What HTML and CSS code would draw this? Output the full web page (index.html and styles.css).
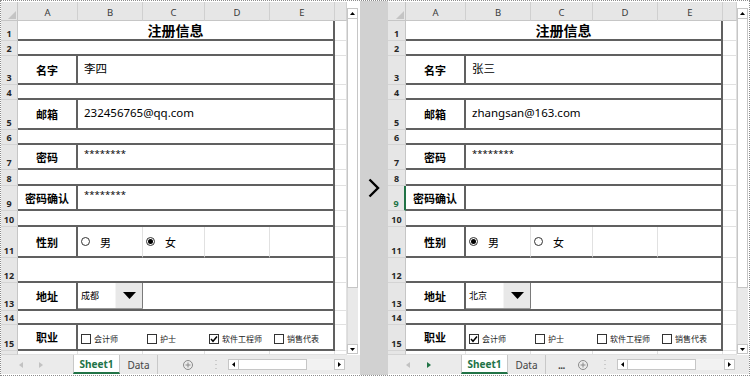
FILE: index.html
```html
<!DOCTYPE html>
<html>
<head>
<meta charset="utf-8">
<link rel="stylesheet" href="styles.css">
</head>
<body>
<div class="frame">
  <!-- LEFT PANE -->
  <div class="pane">
    <div class="sheet">
      <div class="grid">
        <div class="corner"><svg width="8" height="8" viewBox="0 0 8 8"><path d="M8 0 L8 8 L0 8 Z" fill="#c4c4c4"/></svg></div>
        <div class="ch">A</div><div class="ch">B</div><div class="ch">C</div><div class="ch">D</div><div class="ch">E</div><div class="ch"></div>

        <div class="rh">1</div><div class="c b s5 title">注册信息</div><div class="c"></div>
        <div class="rh">2</div><div class="c b s5"></div><div class="c"></div>
        <div class="rh">3</div><div class="c b lbl">名字</div><div class="c b s4 val">李四</div><div class="c"></div>
        <div class="rh">4</div><div class="c b s5"></div><div class="c"></div>
        <div class="rh">5</div><div class="c b lbl">邮箱</div><div class="c b s4 val">232456765@qq.com</div><div class="c"></div>
        <div class="rh">6</div><div class="c b s5"></div><div class="c"></div>
        <div class="rh">7</div><div class="c b lbl">密码</div><div class="c b s4 val"><span class="pw">********</span></div><div class="c"></div>
        <div class="rh">8</div><div class="c b s5"></div><div class="c"></div>
        <div class="rh">9</div><div class="c b lbl">密码确认</div><div class="c b s4 val"><span class="pw">********</span></div><div class="c"></div>
        <div class="rh">10</div><div class="c b s5"></div><div class="c"></div>
        <div class="rh">11</div><div class="c b lbl">性别</div>
        <div class="c bb opt"><span class="radio"></span><span class="opt-text">男</span></div>
        <div class="c bb opt"><span class="radio on"></span><span class="opt-text">女</span></div>
        <div class="c bb"></div><div class="c b"></div><div class="c"></div>
        <div class="rh">12</div><div class="c b s5"></div><div class="c"></div>
        <div class="rh">13</div><div class="c b lbl">地址</div>
        <div class="c bb nr"><div class="combo"><span class="combo-text">成都</span><span class="combo-btn"><svg width="13" height="7" viewBox="0 0 13 7"><path d="M0 0 H13 L6.5 7 Z" fill="#000"/></svg></span></div></div>
        <div class="c b s3"></div><div class="c"></div>
        <div class="rh">14</div><div class="c b s5"></div><div class="c"></div>
        <div class="rh">15</div><div class="c b lbl">职业</div>
        <div class="c bb nr chk"><span class="box"></span><span class="chk-text">会计师</span></div>
        <div class="c bb nr chk"><span class="box"></span><span class="chk-text">护士</span></div>
        <div class="c bb nr chk"><span class="box"><svg width="8" height="8" viewBox="0 0 8 8"><path d="M1 4 L3 6.3 L7 1.5" stroke="#000" stroke-width="1.5" fill="none"/></svg></span><span class="chk-text">软件工程师</span></div>
        <div class="c b chk"><span class="box"></span><span class="chk-text">销售代表</span></div>
        <div class="c"></div>
        <div class="rh"></div><div class="c"></div><div class="c"></div><div class="c"></div><div class="c"></div><div class="c"></div><div class="c"></div>
      </div>
      <div class="vscroll">
        <div class="sbtn"><svg width="5" height="3" viewBox="0 0 5 3"><path d="M0 3 L2.5 0 L5 3 Z" fill="#000"/></svg></div>
        <div class="vthumb"></div>
        <div class="vtrack"></div>
        <div class="sbtn down"><svg width="5" height="3" viewBox="0 0 5 3"><path d="M0 0 L5 0 L2.5 3 Z" fill="#000"/></svg></div>
      </div>
    </div>
    <div class="tabbar">
      <div class="nav">
        <svg width="4" height="6" viewBox="0 0 4 6"><path d="M4 0 L0 3 L4 6 Z" fill="#c2c2c2"/></svg>
        <svg width="4" height="6" viewBox="0 0 4 6"><path d="M0 0 L4 3 L0 6 Z" fill="#c2c2c2"/></svg>
      </div>
      <div class="tab tab-active">Sheet1</div>
      <div class="tab tab-data">Data</div>
      <div class="addbtn add-l"><svg width="10" height="10" viewBox="0 0 10 10"><circle cx="5" cy="5" r="4.5" fill="none" stroke="#8a8a8a"/><path d="M5 2.5 V7.5 M2.5 5 H7.5" stroke="#8a8a8a"/></svg></div>
      <div class="vdots dots-l"><svg width="2" height="9" viewBox="0 0 2 9"><rect x="0.5" y="0" width="1" height="1" fill="#aaa"/><rect x="0.5" y="4" width="1" height="1" fill="#aaa"/><rect x="0.5" y="8" width="1" height="1" fill="#aaa"/></svg></div>
      <div class="hscroll hs-l">
        <div class="hbtn"><svg width="3" height="5" viewBox="0 0 3 5"><path d="M3 0 L0 2.5 L3 5 Z" fill="#000"/></svg></div>
        <div class="hthumb"></div>
        <div class="htrack"></div>
        <div class="hbtn"><svg width="3" height="5" viewBox="0 0 3 5"><path d="M0 0 L3 2.5 L0 5 Z" fill="#000"/></svg></div>
      </div>
    </div>
  </div>

  <div class="divider"><svg width="12" height="20" viewBox="0 0 12 20"><path d="M1.5 1.5 L10 10 L1.5 18.5" stroke="#000" stroke-width="2.4" fill="none"/></svg></div>

  <!-- RIGHT PANE -->
  <div class="pane pane-r">
    <div class="sheet">
      <div class="grid">
        <div class="corner"><svg width="8" height="8" viewBox="0 0 8 8"><path d="M8 0 L8 8 L0 8 Z" fill="#c4c4c4"/></svg></div>
        <div class="ch">A</div><div class="ch">B</div><div class="ch">C</div><div class="ch">D</div><div class="ch">E</div><div class="ch"></div>

        <div class="rh">1</div><div class="c b s5 title">注册信息</div><div class="c"></div>
        <div class="rh">2</div><div class="c b s5"></div><div class="c"></div>
        <div class="rh">3</div><div class="c b lbl">名字</div><div class="c b s4 val">张三</div><div class="c"></div>
        <div class="rh">4</div><div class="c b s5"></div><div class="c"></div>
        <div class="rh">5</div><div class="c b lbl">邮箱</div><div class="c b s4 val">zhangsan@163.com</div><div class="c"></div>
        <div class="rh">6</div><div class="c b s5"></div><div class="c"></div>
        <div class="rh">7</div><div class="c b lbl">密码</div><div class="c b s4 val"><span class="pw">********</span></div><div class="c"></div>
        <div class="rh">8</div><div class="c b s5"></div><div class="c"></div>
        <div class="rh sel">9</div><div class="c b lbl">密码确认</div><div class="c b s4 val"></div><div class="c"></div>
        <div class="rh">10</div><div class="c b s5"></div><div class="c"></div>
        <div class="rh">11</div><div class="c b lbl">性别</div>
        <div class="c bb opt"><span class="radio on"></span><span class="opt-text">男</span></div>
        <div class="c bb opt"><span class="radio"></span><span class="opt-text">女</span></div>
        <div class="c bb"></div><div class="c b"></div><div class="c"></div>
        <div class="rh">12</div><div class="c b s5"></div><div class="c"></div>
        <div class="rh">13</div><div class="c b lbl">地址</div>
        <div class="c bb nr"><div class="combo"><span class="combo-text">北京</span><span class="combo-btn"><svg width="13" height="7" viewBox="0 0 13 7"><path d="M0 0 H13 L6.5 7 Z" fill="#000"/></svg></span></div></div>
        <div class="c b s3"></div><div class="c"></div>
        <div class="rh">14</div><div class="c b s5"></div><div class="c"></div>
        <div class="rh">15</div><div class="c b lbl">职业</div>
        <div class="c bb nr chk"><span class="box"><svg width="8" height="8" viewBox="0 0 8 8"><path d="M1 4 L3 6.3 L7 1.5" stroke="#000" stroke-width="1.5" fill="none"/></svg></span><span class="chk-text">会计师</span></div>
        <div class="c bb nr chk"><span class="box"></span><span class="chk-text">护士</span></div>
        <div class="c bb nr chk"><span class="box"></span><span class="chk-text">软件工程师</span></div>
        <div class="c b chk"><span class="box"></span><span class="chk-text">销售代表</span></div>
        <div class="c"></div>
        <div class="rh"></div><div class="c"></div><div class="c"></div><div class="c"></div><div class="c"></div><div class="c"></div><div class="c"></div>
      </div>
      <div class="vscroll">
        <div class="sbtn"><svg width="5" height="3" viewBox="0 0 5 3"><path d="M0 3 L2.5 0 L5 3 Z" fill="#000"/></svg></div>
        <div class="vthumb"></div>
        <div class="vtrack"></div>
        <div class="sbtn down"><svg width="5" height="3" viewBox="0 0 5 3"><path d="M0 0 L5 0 L2.5 3 Z" fill="#000"/></svg></div>
      </div>
    </div>
    <div class="tabbar">
      <div class="nav nav-r">
        <svg width="4" height="6" viewBox="0 0 4 6"><path d="M4 0 L0 3 L4 6 Z" fill="#c2c2c2"/></svg>
        <svg width="4" height="6" viewBox="0 0 4 6"><path d="M0 0 L4 3 L0 6 Z" fill="#217346"/></svg>
      </div>
      <div class="tab tab-active">Sheet1</div>
      <div class="tab tab-data">Data</div>
      <div class="more">...</div>
      <div class="addbtn add-r"><svg width="10" height="10" viewBox="0 0 10 10"><circle cx="5" cy="5" r="4.5" fill="none" stroke="#8a8a8a"/><path d="M5 2.5 V7.5 M2.5 5 H7.5" stroke="#8a8a8a"/></svg></div>
      <div class="vdots dots-r"><svg width="2" height="9" viewBox="0 0 2 9"><rect x="0.5" y="0" width="1" height="1" fill="#aaa"/><rect x="0.5" y="4" width="1" height="1" fill="#aaa"/><rect x="0.5" y="8" width="1" height="1" fill="#aaa"/></svg></div>
      <div class="hscroll hs-r">
        <div class="hbtn"><svg width="3" height="5" viewBox="0 0 3 5"><path d="M3 0 L0 2.5 L3 5 Z" fill="#000"/></svg></div>
        <div class="hthumb"></div>
        <div class="htrack"></div>
        <div class="hbtn"><svg width="3" height="5" viewBox="0 0 3 5"><path d="M0 0 L3 2.5 L0 5 Z" fill="#000"/></svg></div>
      </div>
    </div>
  </div>
</div>
</body>
</html>
```
FILE: styles.css
```css
* { box-sizing: border-box; }
html, body { margin: 0; padding: 0; background: #fff; }
body {
  font-family: "Noto Sans", "Noto Sans CJK SC", sans-serif;
  color: #000;
}
.frame {
  width: 750px;
  height: 376px;
  border: 1px dotted #8c8c8c;
  display: flex;
  overflow: hidden;
}
.pane {
  width: 359px;
  display: flex;
  flex-direction: column;
  padding-top: 1px;
  flex: none;
}
.pane-r { width: 361px; }
.divider {
  width: 28px;
  flex: none;
  background: #d1d1d1;
  display: flex;
  align-items: center;
  justify-content: center;
}
.sheet { display: flex; height: 353px; }
.grid {
  flex: 1;
  display: grid;
  grid-template-columns: 17px 60px 65px 62px 65px 65px 1fr;
  grid-template-rows: 19px 20px 15px 29px 15px 30px 15px 25px 16px 25px 16px 31px 25px 28px 14px 26px 4px;
  min-width: 0;
}
.pane-r .grid { grid-template-columns: 18px 60px 65px 62px 65px 65px 1fr; }
.corner {
  background: #e6e6e6;
  border-right: 1px solid #c6c6c6;
  border-bottom: 1px solid #c6c6c6;
  display: flex;
  align-items: flex-end;
  justify-content: flex-end;
  padding: 0 1px 1px 0;
}
.ch {
  background: #e6e6e6;
  border-right: 1px solid #d0d0d0;
  border-bottom: 1px solid #c6c6c6;
  font-size: 9.5px;
  color: #3a3a3a;
  display: flex;
  align-items: center;
  justify-content: center;
  padding-top: 2px;
}
.rh {
  background: #e6e6e6;
  border-right: 1px solid #c6c6c6;
  border-bottom: 1px solid #d4d4d4;
  font-size: 9px;
  font-weight: bold;
  color: #262626;
  display: flex;
  align-items: flex-end;
  justify-content: center;
  padding-bottom: 2px;
  line-height: 1;
}
.rh.sel { color: #217346; border-right: 2px solid #217346; }
.c {
  border-right: 1px solid #e1e1e1;
  border-bottom: 1px solid #e1e1e1;
  display: flex;
  align-items: center;
  min-width: 0;
  white-space: nowrap;
}
.b { border-right: 2px solid #606060; border-bottom: 2px solid #606060; }
.bb { border-bottom: 2px solid #606060; }
.nr { border-right: none; }
.s5 { grid-column: span 5; }
.s4 { grid-column: span 4; }
.s3 { grid-column: span 3; }
.title {
  justify-content: center;
  font-family: "Noto Sans CJK SC", sans-serif;
  font-weight: bold;
  font-size: 14px;
}
.lbl {
  justify-content: center;
  font-family: "Noto Sans CJK SC", sans-serif;
  font-weight: bold;
  font-size: 11px;
}
.val {
  padding-left: 6px;
  padding-bottom: 3px;
  font-size: 11.5px;
}
.pw { font-size: 9.5px; padding-bottom: 3px; }
.opt { padding-left: 3px; }
.opt-text { margin-left: 10px; font-size: 11px; font-family: "Noto Sans CJK SC", sans-serif; }
.radio {
  width: 9px;
  height: 9px;
  border: 1px solid #333;
  border-radius: 50%;
  display: flex;
  align-items: center;
  justify-content: center;
  background: #fff;
}
.radio.on::before {
  content: "";
  width: 5px;
  height: 5px;
  border-radius: 50%;
  background: #000;
}
.combo { display: flex; width: 100%; height: 100%; border-bottom: 1px solid #9a9a9a; }
.combo-text {
  flex: 1;
  display: flex;
  align-items: center;
  padding-left: 3px;
  font-size: 9px;
  font-family: "Noto Sans CJK SC", sans-serif;
}
.combo-btn {
  width: 28px;
  background: #e8e8e8;
  border-right: 1px solid #7a7a7a;
  border-left: 1px solid #f4f4f4;
  display: flex;
  align-items: center;
  justify-content: center;
  padding-bottom: 1px;
}
.chk { padding-left: 3px; padding-top: 3px; }
.chk + .chk { padding-left: 4px; }
.box {
  width: 10px;
  height: 10px;
  border: 1px solid #333;
  background: #fff;
  display: flex;
  align-items: center;
  justify-content: center;
  flex: none;
}
.chk-text {
  margin-left: 3px;
  font-size: 8px;
  font-family: "Noto Sans CJK SC", sans-serif;
  color: #222;
}
.vscroll {
  width: 11px;
  margin-right: 2px;
  display: flex;
  flex-direction: column;
  padding-top: 6px;
  padding-bottom: 1px;
  flex: none;
}
.pane-r .vscroll { margin-right: 1px; }
.sbtn {
  height: 11px;
  background: #fff;
  border: 1px solid #c6c6c6;
  display: flex;
  align-items: center;
  justify-content: center;
}
.sbtn.down { height: 10px; }
.vthumb { height: 269px; background: #fff; border: 1px solid #c6c6c6; border-top: none; }
.vtrack { flex: 1; background: #e9e9e9; border-left: 1px solid #dadada; }
.tabbar {
  height: 19px;
  display: flex;
  align-items: stretch;
  background: #ebebeb;
  font-size: 10px;
}
.nav {
  width: 72px;
  display: flex;
  align-items: center;
  padding-left: 18px;
  gap: 16px;
}
.nav-r { width: 73px; gap: 17px; }
.tab { display: flex; align-items: center; justify-content: center; }
.tab-active {
  width: 47px;
  background: #fff;
  color: #217346;
  font-weight: bold;
  border-left: 1px solid #c8c8c8;
  border-right: 1px solid #c8c8c8;
  border-bottom: 2px solid #217346;
  padding-top: 1px;
}
.tab-data {
  width: 38px;
  color: #444;
  border-right: 1px solid #c8c8c8;
}
.more { margin-left: 12px; width: 10px; display: flex; align-items: center; color: #444; font-weight: bold; letter-spacing: -0.5px; }
.addbtn { display: flex; align-items: center; }
.add-l { margin-left: 25px; }
.add-r { margin-left: 10px; }
.vdots { display: flex; align-items: center; }
.dots-l { margin-left: 22px; }
.dots-r { margin-left: 16px; }
.hscroll {
  display: flex;
  height: 11px;
  align-self: center;
  margin-left: 11px;
  width: 117px;
}
.hs-r { width: 118px; }
.hbtn {
  width: 11px;
  background: #fff;
  border: 1px solid #c6c6c6;
  display: flex;
  align-items: center;
  justify-content: center;
}
.hthumb { width: 68px; background: #fff; border: 1px solid #c6c6c6; border-left: none; }
.htrack { flex: 1; background: #f2f2f2; }
```
